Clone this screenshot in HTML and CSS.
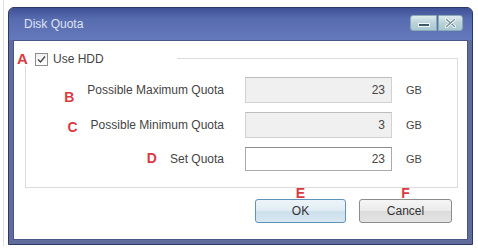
FILE: index.html
```html
<!DOCTYPE html>
<html lang="en">
<head>
    <meta charset="UTF-8">
    <title>Disk Quota</title>
    <link rel="stylesheet" href="styles.css">
</head>
<body>
    <div class="frame">
        <div class="window">
            <div class="titlebar">
                <span class="title">Disk Quota</span>
                <div class="caption-buttons">
                    <span class="cap-btn cap-min">
                        <svg width="12" height="4" viewBox="0 0 12 4"><rect x="0.5" y="0.5" width="11" height="3" fill="#3d5866" stroke="#f4f8fa" stroke-width="1"/></svg>
                    </span>
                    <span class="cap-btn cap-close">
                        <svg width="11" height="10" viewBox="0 0 11 10"><path d="M1.5 1.5 L9.5 8.5 M9.5 1.5 L1.5 8.5" stroke="#f4f7f9" stroke-width="3.2" stroke-linecap="round"/><path d="M1.5 1.5 L9.5 8.5 M9.5 1.5 L1.5 8.5" stroke="#7d8f98" stroke-width="1.4" stroke-linecap="round"/></svg>
                    </span>
                </div>
            </div>
            <div class="client">
                <div class="group-head">
                    <span class="mark mark-a">A</span>
                    <span class="check">
                        <svg width="9" height="9" viewBox="0 0 9 9"><path d="M1 4.5 L3.5 7 L8 1.5" fill="none" stroke="#4a4a4a" stroke-width="1.4"/></svg>
                    </span>
                    <span class="check-label">Use HDD</span>
                    <span class="group-line"></span>
                </div>
                <div class="group-body">
                    <div class="row">
                        <div class="label-cell"><span class="mark mark-b">B</span><span>Possible Maximum Quota</span></div>
                        <input class="field" type="text" value="23" readonly>
                        <span class="unit">GB</span>
                    </div>
                    <div class="row">
                        <div class="label-cell"><span class="mark mark-c">C</span><span>Possible Minimum Quota</span></div>
                        <input class="field" type="text" value="3" readonly>
                        <span class="unit">GB</span>
                    </div>
                    <div class="row row-set">
                        <div class="label-cell"><span class="mark mark-d">D</span><span>Set Quota</span></div>
                        <input class="field field-edit" type="text" value="23">
                        <span class="unit">GB</span>
                    </div>
                </div>
                <div class="actions">
                    <div class="action">
                        <span class="mark">E</span>
                        <button class="btn btn-ok">OK</button>
                    </div>
                    <div class="action">
                        <span class="mark">F</span>
                        <button class="btn btn-cancel">Cancel</button>
                    </div>
                </div>
            </div>
        </div>
    </div>
</body>
</html>
```

FILE: styles.css
```css
* {
    margin: 0;
    padding: 0;
    box-sizing: border-box;
}
body {
    background: #ffffff;
    font-family: "Liberation Sans", Arial, sans-serif;
    font-size: 12px;
    color: #444;
}
.frame {
    margin-left: 3px;
    height: 246px;
    border-left: 1px solid #e0e0e0;
    padding: 7px 0 0 4px;
}
.window {
    width: 465px;
    height: 238px;
    background: #5f6c9c;
    border: 1px solid #2f3a64;
    border-radius: 6px 6px 0 0;
    padding: 0 4px 4px;
    display: flex;
    flex-direction: column;
}
.titlebar {
    margin: 0 -4px;
    height: 32px;
    border-radius: 5px 5px 0 0;
    background: linear-gradient(#3f5196, #586cb0 35%, #6479bb);
    display: flex;
    justify-content: space-between;
    align-items: flex-start;
    padding: 0 9px 0 15px;
}
.title {
    line-height: 32px;
    color: #dfe4f2;
    font-size: 12px;
}
.caption-buttons {
    display: flex;
    gap: 1px;
    margin-top: 7px;
}
.cap-btn {
    height: 16px;
    display: flex;
    align-items: center;
    justify-content: center;
    background: linear-gradient(#dcebee, #b9d3d8 50%, #aac8cf);
    border: 1px solid #8aaab6;
}
.cap-min {
    width: 27px;
    border-radius: 3px 0 0 3px;
    align-items: flex-end;
    padding-bottom: 3px;
}
.cap-close {
    width: 25px;
    border-radius: 0 3px 3px 0;
}
.client {
    flex: 1;
    background: #ffffff;
    border: 1px solid #4a5684;
    padding: 11px 9px 0 11px;
}
.mark {
    color: #dc3a42;
    font-weight: bold;
    font-size: 14px;
    line-height: 11px;
}
.group-head {
    display: flex;
    align-items: center;
    height: 14px;
    margin-left: -8px;
}
.mark-a {
    font-size: 15px;
    width: 10px;
    margin-right: 8px;
    line-height: 12px;
}
.check {
    width: 13px;
    height: 13px;
    border: 1px solid #8e8e8e;
    background: linear-gradient(#f0f0f0, #ffffff);
    display: flex;
    align-items: center;
    justify-content: center;
    margin-right: 5px;
}
.check-label {
    width: 124px;
}
.group-line {
    flex: 1;
    align-self: flex-end;
    height: 8px;
    border-top: 1px solid #dcdcdc;
    border-right: 1px solid #dcdcdc;
}
.group-body {
    border: 1px solid #dcdcdc;
    border-top: none;
    padding: 11px 0 16px;
    display: flex;
    flex-direction: column;
    gap: 9px;
}
.row {
    display: flex;
    align-items: center;
    height: 26px;
}
.row-set {
    height: 24px;
}
.label-cell {
    width: 198px;
    margin-right: 21px;
    height: 100%;
    display: flex;
    justify-content: flex-end;
    align-items: center;
}
.label-cell .mark {
    margin-right: 13px;
    align-self: flex-end;
}
.mark-c {
    margin-bottom: 5px;
}
.mark-d {
    margin-bottom: 7px;
}
.field {
    width: 147px;
    height: 100%;
    border: 1px solid #d2d2d2;
    border-top-color: #bcbcbc;
    background: #f0f0f0;
    font-family: "Liberation Sans", Arial, sans-serif;
    font-size: 12px;
    color: #444;
    text-align: right;
    padding: 0 6px;
    outline: none;
}
.field-edit {
    background: #ffffff;
    border-color: #ababab;
    border-top-color: #8c8c8c;
}
.unit {
    margin-left: 14px;
    font-size: 11px;
}
.actions {
    display: flex;
    justify-content: flex-end;
    gap: 13px;
    margin-right: 6px;
}
.action {
    display: flex;
    flex-direction: column;
    align-items: center;
}
.btn {
    height: 24px;
    font-family: "Liberation Sans", Arial, sans-serif;
    font-size: 12px;
    color: #333;
    border-radius: 3px;
}
.btn-ok {
    width: 91px;
    border: 1px solid #5f93ba;
    background: linear-gradient(#eef5fa, #e0ecf4 50%, #cde0ec 51%, #d8e7f1);
}
.btn-cancel {
    width: 93px;
    border: 1px solid #8c8c8c;
    background: linear-gradient(#f5f5f5, #ebebeb 50%, #dcdcdc 51%, #e4e4e4);
}
```
